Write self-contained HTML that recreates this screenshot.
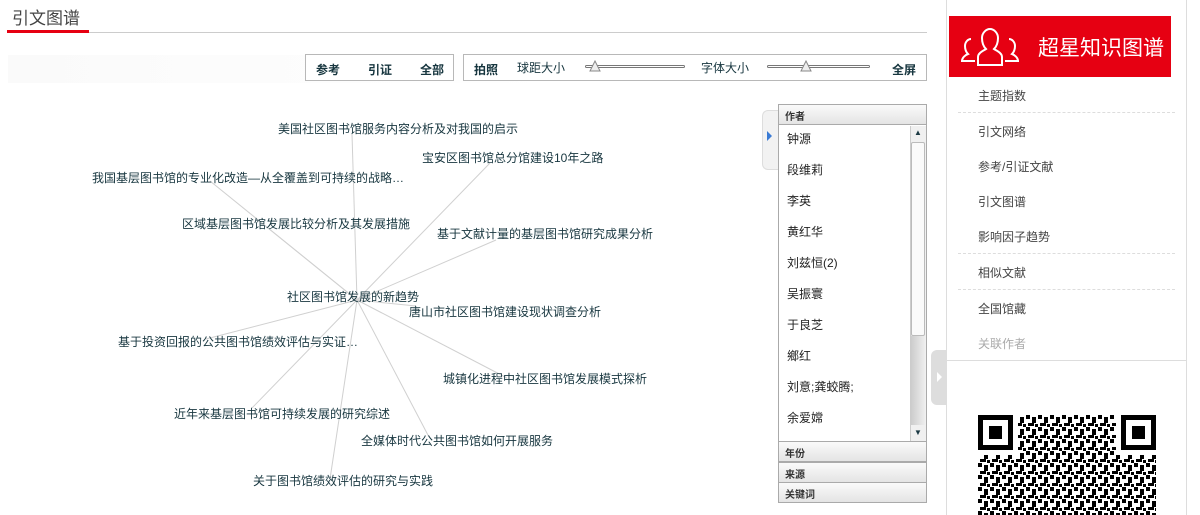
<!DOCTYPE html>
<html><head><meta charset="utf-8"><style>
*{margin:0;padding:0;box-sizing:border-box}
body{width:1200px;height:515px;background:#fff;font-family:"Liberation Sans","Noto Sans CJK SC",sans-serif;position:relative;overflow:hidden;color:#1c3a44}
.a{position:absolute;white-space:nowrap}
.t{font-size:12px;color:#17363f}
.box{position:absolute;border:1px solid #b8b8b8;background:#fff;height:27px;font-size:12px;font-weight:bold;color:#17363f}
.hd{position:absolute;left:778px;width:149px;height:21px;border:1px solid #aaa;background:linear-gradient(#fafafa,#e4e4e4);font-size:10px;font-weight:bold;padding:3px 0 0 6px;color:#333}
.au{position:absolute;left:787px;font-size:12px;color:#222}
.mi{position:absolute;left:978px;font-size:12px;color:#444}
.dl{position:absolute;left:958px;width:217px;border-top:1px dashed #ddd}
</style></head><body>
<div class="a" style="left:12px;top:4px;font-size:17px;color:#444">引文图谱</div>
<div class="a" style="left:7px;top:32px;width:920px;height:1px;background:#ccc"></div>
<div class="a" style="left:7px;top:30px;width:82px;height:3px;background:#e60012"></div>
<div class="a" style="left:8px;top:55px;width:919px;height:28px;background:linear-gradient(90deg,#fafafa,#fff 60%)"></div>
<div class="box" style="left:305px;top:54px;width:149px"><span class="a" style="left:10px;top:6px">参考</span><span class="a" style="left:62px;top:6px">引证</span><span class="a" style="left:114px;top:6px">全部</span></div>
<div class="box" style="left:463px;top:54px;width:464px"><span class="a" style="left:10px;top:6px">拍照</span><span class="a" style="left:53px;top:4px;font-weight:normal">球距大小</span>
<span class="a" style="left:121px;top:10px;width:100px;height:3px;border:1px solid #777;border-radius:2px"></span>
<svg class="a" style="left:125px;top:5px" width="12" height="12"><path d="M6 1L11 11H1Z" fill="#eee" stroke="#888"/></svg>
<span class="a" style="left:237px;top:4px;font-weight:normal">字体大小</span>
<span class="a" style="left:303px;top:10px;width:103px;height:3px;border:1px solid #777;border-radius:2px"></span>
<svg class="a" style="left:336px;top:5px" width="12" height="12"><path d="M6 1L11 11H1Z" fill="#eee" stroke="#888"/></svg>
<span class="a" style="left:428px;top:6px">全屏</span></div>
<svg class="a" style="left:0;top:0" width="760" height="515"><g stroke="#d0d0d0" stroke-width="1">
<line x1="357" y1="300" x2="352" y2="134"/><line x1="357" y1="300" x2="490" y2="163"/><line x1="357" y1="300" x2="210" y2="181"/><line x1="357" y1="300" x2="263" y2="224"/><line x1="357" y1="300" x2="496" y2="240"/><line x1="357" y1="300" x2="416" y2="306"/><line x1="357" y1="300" x2="206" y2="339"/><line x1="357" y1="300" x2="507" y2="378"/><line x1="357" y1="300" x2="252" y2="408"/><line x1="357" y1="300" x2="429" y2="437"/><line x1="357" y1="300" x2="330" y2="479"/></g></svg>
<div class="a t" style="left:278px;top:120px">美国社区图书馆服务内容分析及对我国的启示</div>
<div class="a t" style="left:422px;top:149px">宝安区图书馆总分馆建设10年之路</div>
<div class="a t" style="left:92px;top:169px">我国基层图书馆的专业化改造—从全覆盖到可持续的战略…</div>
<div class="a t" style="left:182px;top:215px">区域基层图书馆发展比较分析及其发展措施</div>
<div class="a t" style="left:437px;top:225px">基于文献计量的基层图书馆研究成果分析</div>
<div class="a t" style="left:287px;top:288px">社区图书馆发展的新趋势</div>
<div class="a t" style="left:409px;top:303px">唐山市社区图书馆建设现状调查分析</div>
<div class="a t" style="left:118px;top:333px">基于投资回报的公共图书馆绩效评估与实证…</div>
<div class="a t" style="left:443px;top:370px">城镇化进程中社区图书馆发展模式探析</div>
<div class="a t" style="left:174px;top:405px">近年来基层图书馆可持续发展的研究综述</div>
<div class="a t" style="left:361px;top:432px">全媒体时代公共图书馆如何开展服务</div>
<div class="a t" style="left:253px;top:472px">关于图书馆绩效评估的研究与实践</div>
<div class="a" style="left:762px;top:110px;width:16px;height:60px;background:#f2f2f2;border:1px solid #ddd;border-right:none;border-radius:6px 0 0 6px"></div>
<div class="a" style="left:767px;top:131px;width:0;height:0;border-left:5px solid #3a7bd5;border-top:5px solid transparent;border-bottom:5px solid transparent"></div>
<div class="a" style="left:778px;top:104px;width:149px;height:399px;border:1px solid #aaa"></div>
<div class="hd" style="top:104px">作者</div>
<div class="a" style="left:910px;top:126px;width:16px;height:315px;background:#f0f0f0;border-left:1px solid #ccc"></div>
<div class="a" style="left:911px;top:142px;width:14px;height:194px;background:#fafafa;border:1px solid #bbb;border-radius:2px"></div>
<div class="a" style="left:911px;top:336px;width:14px;height:89px;background:linear-gradient(90deg,#ccc,#eee)"></div>
<div class="a" style="left:914px;top:128px;font-size:8px">▲</div><div class="a" style="left:914px;top:428px;font-size:8px">▼</div>
<div class="au" style="top:130px">钟源</div><div class="au" style="top:161px">段维莉</div><div class="au" style="top:192px">李英</div><div class="au" style="top:223px">黄红华</div><div class="au" style="top:254px">刘兹恒(2)</div><div class="au" style="top:285px">吴振寰</div><div class="au" style="top:316px">于良芝</div><div class="au" style="top:347px">鄉红</div><div class="au" style="top:378px">刘意;龚蛟腾;</div><div class="au" style="top:409px">余爱嫦</div>
<div class="hd" style="top:441px">年份</div><div class="hd" style="top:462px">来源</div><div class="hd" style="top:482px">关键词</div>
<div class="a" style="left:946px;top:0;width:1px;height:515px;background:#ddd"></div>
<div class="a" style="left:1186px;top:0;width:1px;height:515px;background:#ddd"></div>
<div class="a" style="left:946px;top:360px;width:241px;height:1px;background:#ddd"></div>
<div class="a" style="left:949px;top:16px;width:222px;height:61px;background:#e60012;color:#fff;font-size:21px"><svg class="a" style="left:12px;top:11px" width="58" height="40" fill="none" stroke="#fff" stroke-width="2"><path d="M17 38V30c0-4 5-6 8-8-3-3-4-7-4-11 0-5 4-9 8-9s8 4 8 9c0 4-1 8-4 11 3 2 8 4 8 8v8z"/><path d="M14 34H1c0-3 3-6 6-7-2-2-3-5-3-8 0-4 3-7 6-7"/><path d="M44 34h13c0-3-3-6-6-7 2-2 3-5 3-8 0-4-3-7-6-7"/></svg><span class="a" style="left:89px;top:16px">超星知识图谱</span></div>
<div class="mi" style="top:87px">主题指数</div><div class="dl" style="top:112px"></div>
<div class="mi" style="top:123px">引文网络</div><div class="mi" style="top:158px">参考/引证文献</div><div class="mi" style="top:193px">引文图谱</div><div class="mi" style="top:228px">影响因子趋势</div><div class="dl" style="top:253px"></div>
<div class="mi" style="top:264px">相似文献</div><div class="dl" style="top:289px"></div>
<div class="mi" style="top:300px">全国馆藏</div><div class="mi" style="top:335px;color:#aaa">关联作者</div>
<div class="a" style="left:931px;top:350px;width:16px;height:55px;background:#ddd;border-radius:6px 0 0 6px"></div>
<div class="a" style="left:937px;top:372px;border-left:5px solid #fff;border-top:5px solid transparent;border-bottom:5px solid transparent"></div>
<svg class="a" style="left:978px;top:415px" width="178" height="100">
<defs><pattern id="q" width="12" height="12" patternUnits="userSpaceOnUse"><rect width="4" height="4" fill="#000"/><rect x="6" y="2" width="4" height="6" fill="#000"/><rect x="2" y="8" width="6" height="3" fill="#000"/><rect x="9" y="9" width="3" height="3" fill="#000"/></pattern></defs>
<rect width="178" height="100" fill="url(#q)"/>
<g fill="#fff"><rect width="40" height="40"/><rect x="138" width="40" height="40"/></g>
<g fill="none" stroke="#000" stroke-width="5"><rect x="2.5" y="2.5" width="30" height="30"/><rect x="145.5" y="2.5" width="30" height="30"/></g>
<rect x="11" y="11" width="13" height="13"/><rect x="154" y="11" width="13" height="13"/></svg>
</body></html>
